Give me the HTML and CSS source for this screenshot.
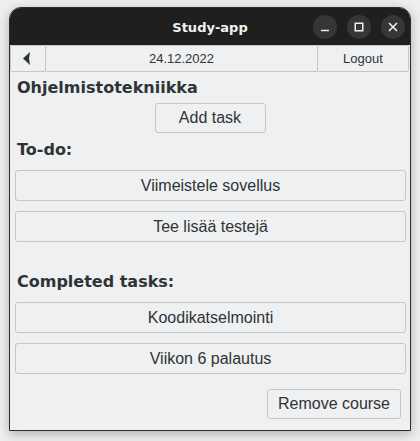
FILE: index.html
```html
<!DOCTYPE html>
<html>
<head>
<meta charset="utf-8">
<link rel="stylesheet" href="styles.css">
</head>
<body>
<div class="window">
  <div class="titlebar">
    <div></div>
    <div class="title">Study-app</div>
    <div class="controls">
      <span class="ctl"><svg width="24" height="24" viewBox="0 0 24 24"><line x1="8" y1="15.5" x2="16" y2="15.5" stroke="#f0f0f0" stroke-width="1.5"/></svg></span>
      <span class="ctl"><svg width="24" height="24" viewBox="0 0 24 24"><rect x="8.25" y="8.25" width="7.5" height="7.5" fill="none" stroke="#f0f0f0" stroke-width="1.5"/></svg></span>
      <span class="ctl"><svg width="24" height="24" viewBox="0 0 24 24"><path d="M8 8 L16 16 M16 8 L8 16" stroke="#f0f0f0" stroke-width="1.6"/></svg></span>
    </div>
  </div>
  <div class="toolbar">
    <button class="tb back"><svg width="8" height="13" viewBox="0 0 8 13"><polygon points="7,0 0,6.5 7,13 6,6.5" fill="#2e3436"/></svg></button>
    <button class="tb date">24.12.2022</button>
    <button class="tb logout">Logout</button>
  </div>
  <div class="content">
    <h2 class="heading course">Ohjelmistotekniikka</h2>
    <div class="center"><button class="btn add">Add task</button></div>
    <h2 class="heading todo">To-do:</h2>
    <div class="tasks">
      <button class="btn task">Viimeistele sovellus</button>
      <button class="btn task">Tee lisää testejä</button>
    </div>
    <h2 class="heading done">Completed tasks:</h2>
    <div class="tasks">
      <button class="btn task">Koodikatselmointi</button>
      <button class="btn task">Viikon 6 palautus</button>
    </div>
    <div class="bottom"><button class="btn remove">Remove course</button></div>
  </div>
</div>
</body>
</html>
```

FILE: styles.css
```css
html, body {
  margin: 0;
  padding: 0;
}
body {
  background: #efefef;
  padding: 7px 9px 0 9px;
  height: 441px;
  box-sizing: border-box;
  overflow: hidden;
}
.window {
  width: 402px;
  height: 424px;
  box-sizing: border-box;
  border: 1px solid #2c2c2c;
  border-radius: 12px 12px 0 0;
  background: #eff0f1;
  box-shadow: 0 3px 12px rgba(0,0,0,0.28);
  overflow: hidden;
  display: flex;
  flex-direction: column;
}
.titlebar {
  height: 37px;
  flex: none;
  background: #1f1f1f;
  display: grid;
  grid-template-columns: 1fr auto 1fr;
  align-items: center;
}
.title {
  color: #f2f2f2;
  font-family: "DejaVu Sans", sans-serif;
  font-weight: bold;
  font-size: 13px;
  padding-top: 1px;
}
.controls {
  display: flex;
  justify-content: flex-end;
  gap: 10px;
  padding-right: 5px;
  padding-top: 1px;
}
.ctl {
  width: 24px;
  height: 24px;
  border-radius: 50%;
  background: #363636;
  display: flex;
}
.toolbar {
  display: flex;
  height: 27px;
  flex: none;
  padding-right: 1px;
}
.tb {
  margin: 0;
  height: 27px;
  box-sizing: border-box;
  border: 1px solid #c4c6c8;
  border-radius: 2px;
  background: #eff0f1;
  color: #2e3436;
  font-family: "Liberation Sans", Arial, sans-serif;
  font-size: 13px;
  padding: 0;
}
.back {
  width: 36px;
  display: flex;
  align-items: center;
  justify-content: center;
  padding-right: 3px;
}
.date {
  flex: 1;
  margin-left: -1px;
}
.logout {
  width: 92px;
  margin-left: -1px;
}
.content {
  flex: 1;
  display: flex;
  flex-direction: column;
}
.heading {
  margin: 0;
  padding-left: 7px;
  font-family: "DejaVu Sans", sans-serif;
  font-weight: bold;
  font-size: 16px;
  line-height: 22px;
  color: #2e3436;
}
.course { margin-top: 5px; }
.todo { margin-top: 6px; }
.done { margin-top: 29px; }
.btn {
  margin: 0;
  box-sizing: border-box;
  border: 1px solid #c4c6c8;
  border-radius: 3px;
  background: #eff0f1;
  color: #2e3436;
  font-family: "Liberation Sans", Arial, sans-serif;
  font-size: 16px;
  padding: 0;
}
.center {
  display: flex;
  justify-content: center;
  margin-top: 4px;
}
.add {
  width: 111px;
  height: 30px;
}
.tasks {
  display: flex;
  flex-direction: column;
  gap: 10px;
  padding: 0 4px 0 5px;
  margin-top: 9px;
}
.task {
  height: 31px;
  width: 100%;
}
.bottom {
  display: flex;
  justify-content: flex-end;
  padding-right: 9px;
  margin-top: 15px;
}
.remove {
  width: 134px;
  height: 30px;
}
```
